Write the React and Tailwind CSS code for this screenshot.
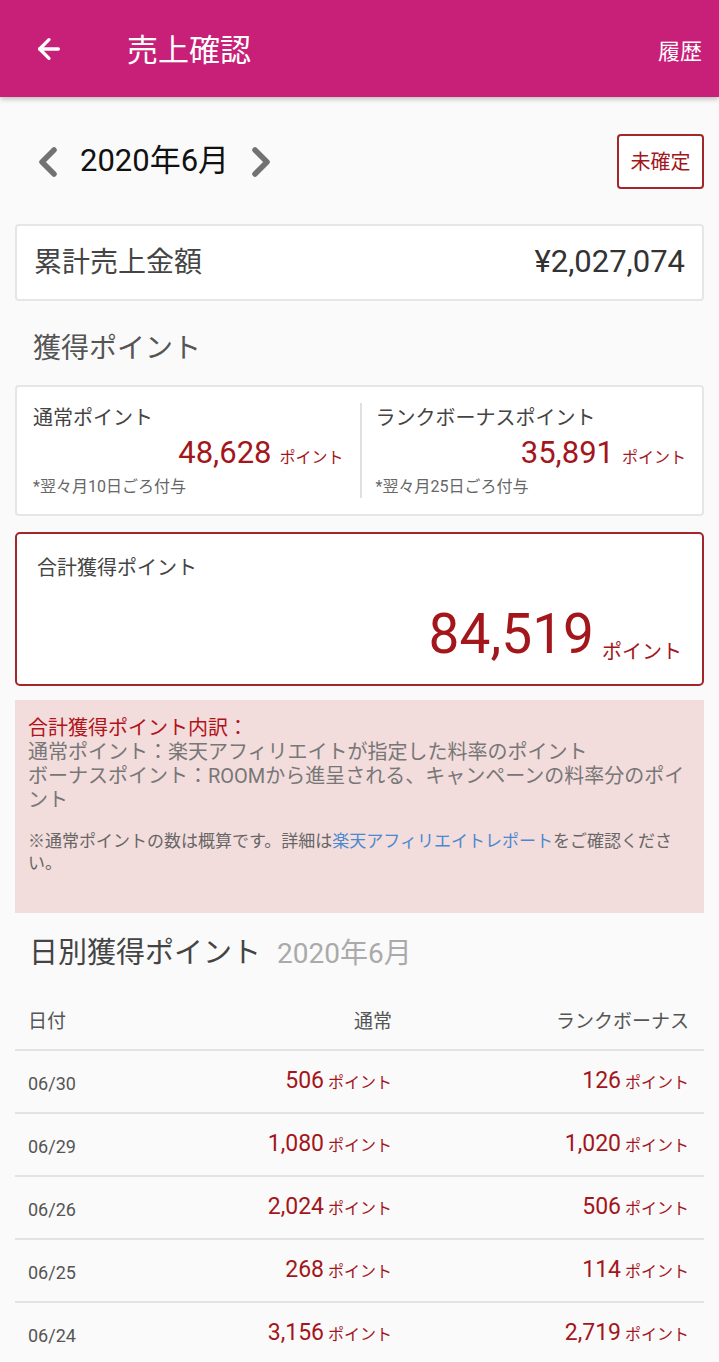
import { ArrowLeft } from 'lucide-react'

const font = { fontFamily: 'Roboto, "Noto Sans CJK JP", sans-serif' }

const rows = [
  { date: '06/30', normal: '506', bonus: '126' },
  { date: '06/29', normal: '1,080', bonus: '1,020' },
  { date: '06/26', normal: '2,024', bonus: '506' },
  { date: '06/25', normal: '268', bonus: '114' },
  { date: '06/24', normal: '3,156', bonus: '2,719' },
]

function Chevron({ dir }) {
  return (
    <svg width="24" height="32" viewBox="0 0 24 32" className="shrink-0">
      <path
        d={dir === 'left' ? 'M18 4 L6 16 L18 28' : 'M6 4 L18 16 L6 28'}
        fill="none"
        stroke="#727272"
        strokeWidth="5.5"
        strokeLinecap="round"
        strokeLinejoin="round"
      />
    </svg>
  )
}

function PointValue({ value }) {
  return (
    <div className="flex items-baseline justify-end gap-2 text-[#a3161b]">
      <span className="text-[31px] leading-none">{value}</span>
      <span className="text-[16px] leading-none">ポイント</span>
    </div>
  )
}

export default function App() {
  return (
    <div className="w-[719px] min-h-[1362px] bg-[#fafafa] overflow-hidden" style={font}>
      <header className="h-[97px] bg-[#c81f78] flex items-center pt-[5px] text-white shadow-[0_2px_5px_rgba(0,0,0,0.25)] relative z-10">
        <div className="w-[127px] pl-[33px] flex items-center -mt-[5px]">
          <ArrowLeft size={32} strokeWidth={2.5} />
        </div>
        <h1 className="text-[31px] flex-1">売上確認</h1>
        <span className="text-[22px] pr-[17px]">履歴</span>
      </header>

      <main className="px-[15px]">
        <div className="mt-[37px] h-[55px] flex items-center">
          <div className="pl-[21px] flex items-center gap-[20px]">
            <Chevron dir="left" />
            <span className="text-[31px] text-[#111]">2020年6月</span>
            <Chevron dir="right" />
          </div>
          <div className="ml-auto h-[55px] w-[87px] border-2 border-[#a3262a] rounded-[4px] bg-white flex items-center justify-center text-[20px] text-[#a3161b]">
            未確定
          </div>
        </div>

        <div className="mt-[35px] h-[77px] bg-white border-2 border-[#e6e6e6] rounded-[4px] flex items-center justify-between px-[17px]">
          <span className="text-[28px] text-[#444]">累計売上金額</span>
          <span className="text-[31px] text-[#333]">¥2,027,074</span>
        </div>

        <h2 className="mt-[28px] pl-[18px] text-[28px] text-[#555] leading-[40px]">獲得ポイント</h2>

        <div className="mt-[16px] h-[131px] bg-white border-2 border-[#e6e6e6] rounded-[4px] flex py-[16px]">
          <div className="flex-1 pl-[16px] pr-[16px] flex flex-col">
            <span className="text-[20px] text-[#444] leading-[30px]">通常ポイント</span>
            <div className="mt-[4px]"><PointValue value="48,628" /></div>
            <span className="mt-[8px] text-[16px] text-[#666] leading-[22px]">*翌々月10日ごろ付与</span>
          </div>
          <div className="w-[2px] bg-[#e0e0e0]" />
          <div className="flex-1 pl-[14px] pr-[16px] flex flex-col">
            <span className="text-[20px] text-[#444] leading-[30px]">ランクボーナスポイント</span>
            <div className="mt-[4px]"><PointValue value="35,891" /></div>
            <span className="mt-[8px] text-[16px] text-[#666] leading-[22px]">*翌々月25日ごろ付与</span>
          </div>
        </div>

        <div className="mt-[16px] h-[154px] bg-white border-2 border-[#a3262a] rounded-[5px] px-[20px] pt-[19px] flex flex-col">
          <span className="text-[20px] text-[#444] leading-[30px]">合計獲得ポイント</span>
          <div className="mt-auto mb-[22px] flex items-end justify-end gap-[8px]">
            <span className="text-[55px] leading-[56px] text-[#a3161b]">84,519</span>
            <span className="text-[20px] leading-[24px] text-[#a3161b] -mb-[2px]">ポイント</span>
          </div>
        </div>

        <div className="mt-[14px] h-[213px] bg-[#f3dcdc] px-[13px] pt-[16px]">
          <p className="text-[20px] leading-[24px] text-[#b0141b]">合計獲得ポイント内訳：</p>
          <p className="text-[20px] leading-[24px] text-[#777]">通常ポイント：楽天アフィリエイトが指定した料率のポイント</p>
          <p className="text-[20px] leading-[24px] text-[#777]">ボーナスポイント：ROOMから進呈される、キャンペーンの料率分のポイント</p>
          <p className="mt-[18px] text-[17px] leading-[22px] text-[#666]">
            ※通常ポイントの数は概算です。詳細は<span className="text-[#4a88d0]">楽天アフィリエイトレポート</span>をご確認ください。
          </p>
        </div>

        <div className="mt-[20px] pl-[14px] flex items-baseline gap-[16px] leading-[40px]">
          <span className="text-[29px] text-[#444]">日別獲得ポイント</span>
          <span className="text-[28px] text-[#aaa]">2020年6月</span>
        </div>

        <div className="mt-[30px]">
          <div className="grid grid-cols-[180px_184px_1fr] pl-[13px] pr-[15px] h-[47px] pb-[8px] items-center border-b-2 border-[#e3e3e3] text-[19px] text-[#555]">
            <span>日付</span>
            <span className="text-right">通常</span>
            <span className="text-right">ランクボーナス</span>
          </div>
          {rows.map(r => (
            <div
              key={r.date}
              className="grid grid-cols-[180px_184px_1fr] pl-[13px] pr-[15px] h-[63px] items-center border-b-2 border-[#e3e3e3]"
            >
              <span className="text-[18px] text-[#555] pt-[4px]">{r.date}</span>
              <div className="flex items-baseline justify-end gap-[4px] text-[#a3161b]">
                <span className="text-[23px]">{r.normal}</span>
                <span className="text-[16px]">ポイント</span>
              </div>
              <div className="flex items-baseline justify-end gap-[4px] text-[#a3161b]">
                <span className="text-[23px]">{r.bonus}</span>
                <span className="text-[16px]">ポイント</span>
              </div>
            </div>
          ))}
        </div>
      </main>
    </div>
  )
}
